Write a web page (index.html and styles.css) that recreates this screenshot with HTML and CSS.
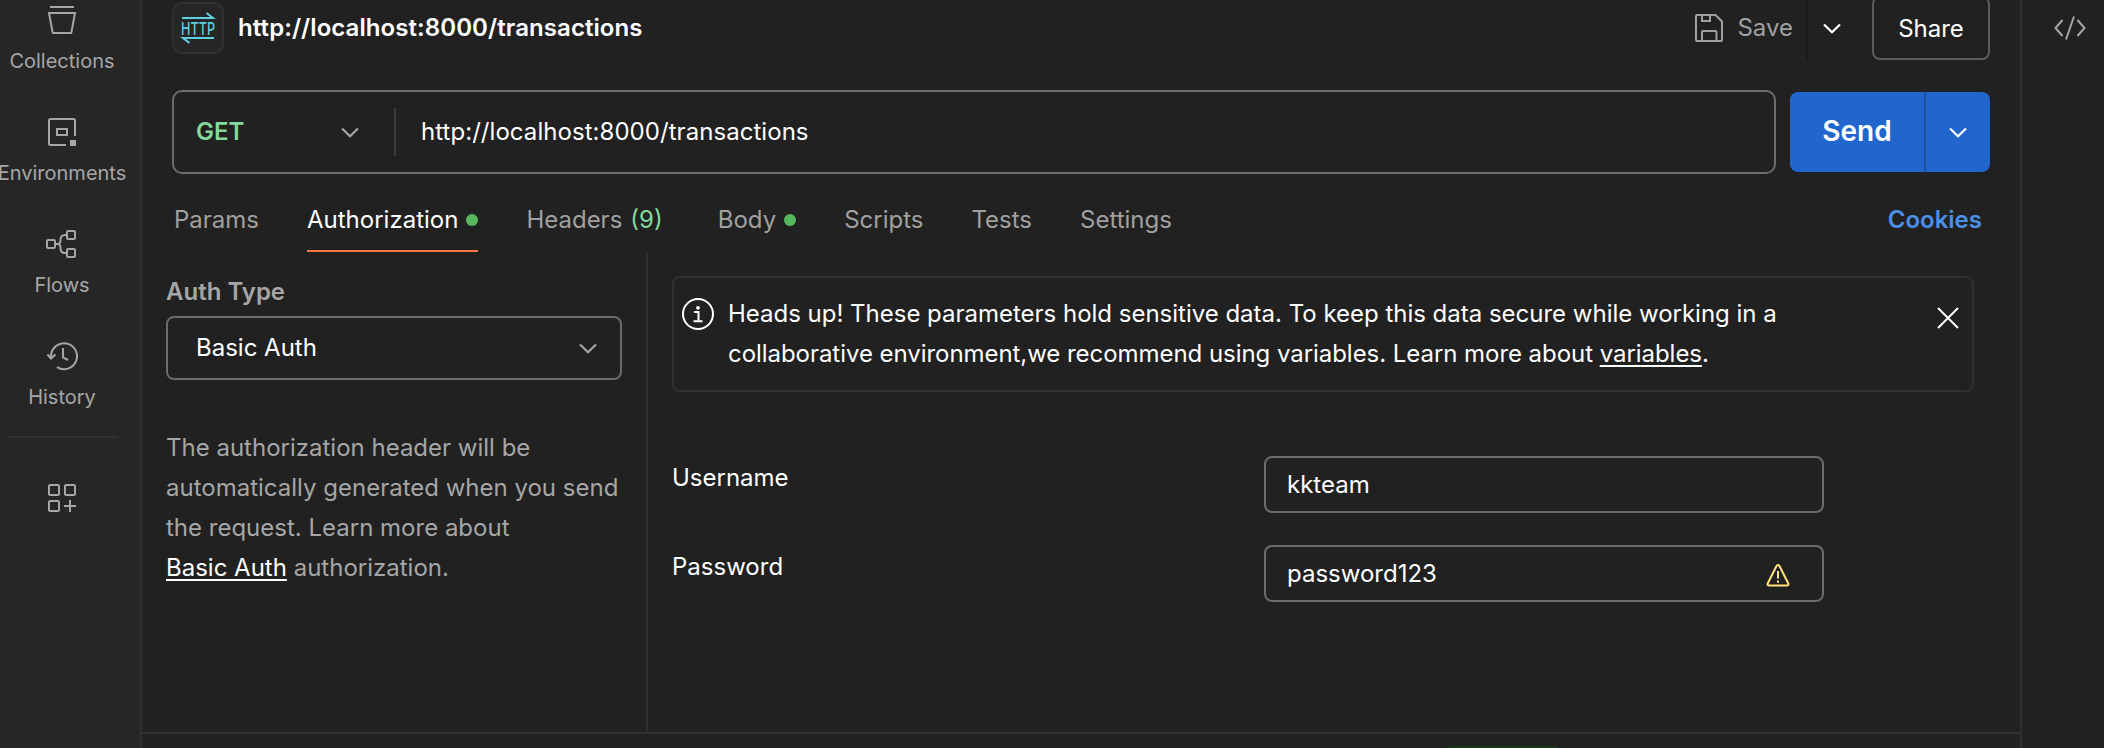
FILE: index.html
```html
<!DOCTYPE html>
<html lang="en">
<head>
<meta charset="utf-8">
<title>http://localhost:8000/transactions</title>
<link rel="stylesheet" href="styles.css">
</head>
<body>
<div class="app">
  <nav class="sidebar">
    <a class="nav-item">
      <svg class="nav-icon" viewBox="0 0 32 32"><path d="M4 3h24M3 9h26l-3.600 19.400a.8.8 0 0 1-.8.6H7.400a.8.8 0 0 1-.8-.6z"/></svg>
      <span>Collections</span>
    </a>
    <a class="nav-item">
      <svg class="nav-icon" viewBox="0 0 32 32"><path d="M20 29H4.500A1.500 1.500 0 0 1 3 27.500v-23A1.500 1.500 0 0 1 4.500 3h23A1.500 1.500 0 0 1 29 4.500V20M11 13h10v6H11z"/><path class="solid" d="M24 24h6v6h-6z"/></svg>
      <span>Environments</span>
    </a>
    <a class="nav-item">
      <svg class="nav-icon" viewBox="0 0 32 32"><rect x="1" y="12" width="8" height="8" rx="1"/><rect x="21" y="3" width="8" height="8" rx="1"/><rect x="21" y="21" width="8" height="8" rx="1"/><path d="M9 16h2.500M21 7h-2c-3 0-4.500 2-4.500 5 0 2.500-1 4-3 4 2 0 3 1.500 3 4 0 3 1.500 5 4.500 5h2"/></svg>
      <span>Flows</span>
    </a>
    <a class="nav-item">
      <svg class="nav-icon" viewBox="0 0 32 32"><path d="M5 17.500V16a13 13 0 1 1 6 11.200M1.500 14.500 5 18.500l4.500-4M17 8v9.500l5 2.500"/></svg>
      <span>History</span>
    </a>
    <hr class="nav-divider">
    <a class="nav-configure">
      <svg class="nav-icon" viewBox="0 0 32 32"><rect x="3" y="3" width="10" height="10" rx="1"/><rect x="19" y="3" width="10" height="10" rx="1"/><rect x="3" y="19" width="10" height="10" rx="1"/><path d="M24 18v12M18 24h12"/></svg>
    </a>
  </nav>

  <main class="main">
    <section class="request">
      <header class="request-header">
        <div class="badge">
          <svg viewBox="0 0 36 36"><path d="M2 8h31l-6.500-5M34 28H3l6.500 5"/><text x="1" y="25" textLength="34" lengthAdjust="spacingAndGlyphs">HTTP</text></svg>
        </div>
        <h1 class="title">http://localhost:8000/transactions</h1>
        <div class="save">
          <svg class="save-icon" viewBox="0 0 28 28"><path d="M2 1h18.500L27 7.500V26a1 1 0 0 1-1 1H2a1 1 0 0 1-1-1V2a1 1 0 0 1 1-1zM7 1v6h8V1M7 27V18a1 1 0 0 1 1-1h12.500a1 1 0 0 1 1 1v9"/></svg>
          <span>Save</span>
        </div>
        <div class="save-more"><svg class="chevron" viewBox="0 0 18 11"><path d="m1 1.500 8 7.700 8-7.700"/></svg></div>
        <button class="share">Share</button>
      </header>

      <div class="url-row">
        <div class="url-box">
          <div class="method"><span>GET</span><svg class="chevron muted" viewBox="0 0 18 11"><path d="m1 1.500 8 7.700 8-7.700"/></svg></div>
          <div class="url">http://localhost:8000/transactions</div>
        </div>
        <div class="send">
          <span class="send-label">Send</span>
          <span class="send-more"><svg class="chevron" viewBox="0 0 18 11"><path d="m1 1.500 8 7.700 8-7.700"/></svg></span>
        </div>
      </div>

      <div class="tabs">
        <a class="tab">Params</a>
        <a class="tab active">Authorization<i class="dot"></i></a>
        <a class="tab headers">Headers <span class="count">(9)</span></a>
        <a class="tab">Body<i class="dot"></i></a>
        <a class="tab">Scripts</a>
        <a class="tab">Tests</a>
        <a class="tab">Settings</a>
        <a class="cookies">Cookies</a>
      </div>

      <div class="auth">
        <aside class="auth-type">
          <h2 class="auth-label">Auth Type</h2>
          <div class="select"><span>Basic Auth</span><svg class="chevron muted" viewBox="0 0 18 11"><path d="m1 1.500 8 7.700 8-7.700"/></svg></div>
          <p class="auth-help">The authorization header will be automatically generated when you send the request. Learn more about <br><a class="link">Basic Auth</a> authorization.</p>
        </aside>
        <div class="auth-form">
          <div class="alert">
            <svg class="info" viewBox="0 0 32 32"><circle cx="16" cy="16" r="15"/><path d="M12 14h4.500v9M11.500 23.300h9"/><circle class="solid" cx="16" cy="9.800" r="1.900"/></svg>
            <p class="alert-text">Heads up! These parameters hold sensitive data. To keep this data secure while working in a<br><span class="tight">collaborative environment,we recommend using variables. Learn more about <a class="link">variables</a>.</span></p>
            <svg class="close" viewBox="0 0 22 22"><path d="m1 1 20 20M21 1 1 21"/></svg>
          </div>
          <div class="field"><label>Username</label><div class="input">kkteam</div></div>
          <div class="field"><label>Password</label><div class="input"><span>password123</span>
            <svg class="warning" viewBox="0 0 24 24"><path d="M10.500 3 1.700 20.500c-.5 1.100.1 2 1.300 2h18c1.200 0 1.800-.9 1.300-2L13.500 3c-.6-1.300-2.400-1.300-3 0zM12 8v7.500M12 17.500v2.300"/></svg>
          </div></div>
        </div>
      </div>
    </section>
    <section class="response"><div class="status"></div></section>
  </main>

  <aside class="rail">
    <svg class="code" viewBox="0 0 32 24"><path d="M8.500 4 1.500 12l7 8M23.500 4l7 8-7 8M20 .5l-8 23"/></svg>
  </aside>
</div>
</body>
</html>
```
FILE: styles.css
```css
* { box-sizing: border-box; }

body {
  margin: 0;
  background: #212121;
  color: #fff;
  font: 24px/40px Inter, sans-serif;
}

h1, h2, p { margin: 0; }

svg {
  display: block;
  flex: none;
  fill: none;
  stroke: currentColor;
  stroke-width: 2;
  overflow: visible;
}

svg .solid { fill: currentColor; stroke: none; }

.app {
  display: flex;
  width: 2104px;
  height: 748px;
  overflow: hidden;
}

/* Left navigation */
.sidebar {
  flex: none;
  width: 142px;
  padding-right: 16px;
  background: #262626;
  border-right: 2px solid #303030;
  color: #a6a6a6;
  font-size: 20px;
  line-height: 28px;
}

.nav-item {
  display: flex;
  flex-direction: column;
  align-items: center;
  gap: 11px;
  height: 112px;
  padding-top: 20px;
}

.nav-item:first-child { height: 96px; padding-top: 4px; }

.nav-icon { width: 32px; height: 32px; }

.nav-divider {
  height: 2px;
  margin: 4px 6px 44px;
  border: 0;
  background: #303030;
}

.nav-configure { display: flex; justify-content: center; }

/* Request area */
.main {
  display: flex;
  flex-direction: column;
  width: 1878px;
}

.request {
  display: flex;
  flex: none;
  flex-direction: column;
  height: 734px;
  border-bottom: 2px solid #303030;
}

.request-header {
  display: flex;
  align-items: center;
  height: 64px;
  margin: -4px 30px 30px;
}

.badge {
  display: flex;
  align-items: center;
  justify-content: center;
  width: 52px;
  height: 52px;
  border: 2px solid #303030;
  border-radius: 10px;
  background: #262626;
  color: #5ed0e0;
}

.badge svg { width: 36px; height: 36px; }

.badge text {
  fill: currentColor;
  stroke: none;
  font: 500 17.500px Inter, sans-serif;
}

.title {
  margin-left: 14px;
  font-size: 24px;
  font-weight: 600;
  letter-spacing: 0.08px;
}

.save {
  display: flex;
  align-items: center;
  gap: 14px;
  margin-left: auto;
  padding-right: 13px;
  color: #a0a0a0;
}

.save-icon { width: 28px; height: 28px; }

.save-more {
  display: flex;
  align-items: center;
  height: 64px;
  padding: 0 31px 0 15px;
  border-left: 2px solid #1a1a1a;
}

.chevron { width: 18px; height: 11px; stroke-width: 2.200; }
.chevron.muted { color: #a6a6a6; }

.share {
  width: 118px;
  height: 64px;
  padding: 0;
  border: 2px solid #5c5c5c;
  border-radius: 8px;
  background: none;
  color: #fff;
  font: 24px Inter, sans-serif;
}

.url-row {
  display: flex;
  align-items: center;
  gap: 14px;
  margin: 0 30px;
}

.url-box {
  display: flex;
  align-items: center;
  width: 1604px;
  height: 84px;
  border: 2px solid #6b6b6b;
  border-radius: 10px;
}

.method {
  display: flex;
  align-items: center;
  justify-content: space-between;
  width: 222px;
  height: 48px;
  padding: 0 35px 0 22px;
  border-right: 2px solid #3d3d3d;
  color: #82d99b;
  font-weight: 600;
}

.url { padding-left: 25px; letter-spacing: 0.05px; }

.send {
  display: flex;
  width: 200px;
  height: 80px;
  border-radius: 8px;
  background: #2166cc;
}

.send-label {
  width: 134px;
  font-size: 28px;
  font-weight: 600;
  line-height: 79px;
  text-align: center;
}

.send-more {
  display: flex;
  align-items: center;
  justify-content: center;
  width: 66px;
  border-left: 2px solid #1c53a5;
}

.tabs {
  display: flex;
  gap: 48px;
  height: 78px;
  padding: 0 38px 0 32px;
  color: #a0a0a0;
  line-height: 91px;
}

.tab { display: flex; }
.tab.active { color: #fff; border-bottom: 2px solid #f27840; }
.tab.headers { margin-right: 7px; }
.tab .count { margin-left: 8px; color: #82d99b; }

.dot {
  width: 12px;
  height: 12px;
  margin: 40px 0 0 8px;
  border-radius: 50%;
  background: #55b85f;
}

.cookies { margin-left: auto; color: #4a8fe8; font-weight: 600; }

/* Authorization tab */
.auth { display: flex; flex: 1; }

.auth-type {
  width: 506px;
  padding: 20px 24px 0;
  border-right: 2px solid #303030;
}

.auth-label {
  color: #a6a6a6;
  font-size: 24px;
  font-weight: 600;
  line-height: 40px;
}

.select {
  display: flex;
  align-items: center;
  justify-content: space-between;
  height: 64px;
  margin: 4px 0 48px;
  padding: 0 23px 0 28px;
  border: 2px solid #6b6b6b;
  border-radius: 8px;
}

.auth-help { color: #a6a6a6; }

.link {
  color: #fff;
  text-decoration: underline 2px;
  text-decoration-skip-ink: none;
  text-underline-offset: 3px;
}

.auth-form { flex: 1; padding: 24px 46px 0 24px; }

.alert {
  display: flex;
  height: 116px;
  margin-bottom: 64px;
  padding: 16px 13px 0 8px;
  border: 2px solid #303030;
  border-radius: 8px;
}

.info { width: 32px; height: 32px; margin-top: 4px; }
.alert-text { margin-left: 14px; letter-spacing: -0.01px; }
.alert-text .tight { letter-spacing: -0.05px; }
.close { width: 22px; height: 22px; margin: 13px 0 0 auto; }

.field {
  display: flex;
  justify-content: space-between;
  margin-bottom: 32px;
  padding-right: 150px;
}

.field label { padding-top: 2px; }

.input {
  display: flex;
  align-items: center;
  justify-content: space-between;
  width: 560px;
  height: 57px;
  padding: 0 32px 0 21px;
  border: 2px solid #6b6b6b;
  border-radius: 8px;
}

.warning { width: 24px; height: 24px; margin-top: 2px; color: #ffe07d; }

/* Response pane, cut off by the window edge */
.status {
  width: 111px;
  height: 24px;
  margin: 12px 0 0 1305px;
  border-radius: 4px;
  background: #113a1b;
}

/* Right rail */
.rail {
  flex: none;
  width: 84px;
  padding: 16px 0 0 32px;
  border-left: 2px solid #303030;
  color: #a6a6a6;
}

.code { width: 32px; height: 24px; }
```
